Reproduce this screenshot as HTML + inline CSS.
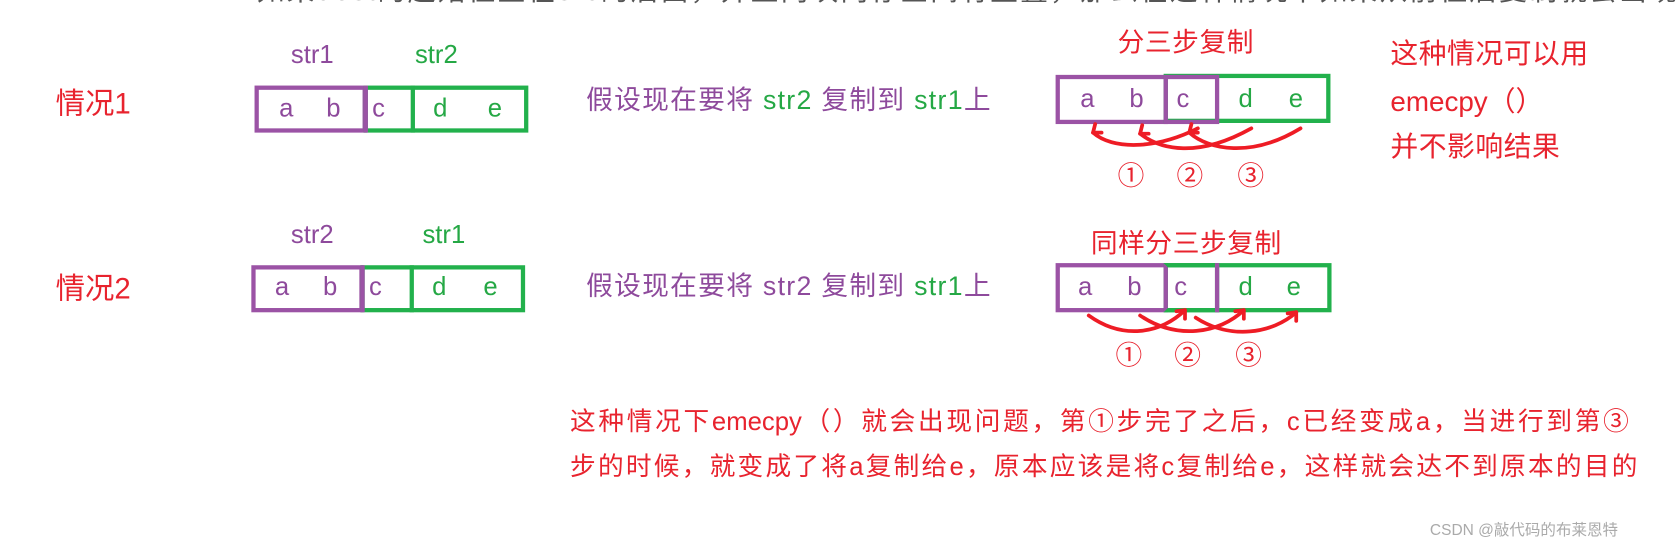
<!DOCTYPE html>
<html><head><meta charset="utf-8"><style>
body{margin:0;width:1677px;height:519px;background:#fff;overflow:hidden;position:relative;font-family:"Liberation Sans","Noto Sans CJK SC",sans-serif}
#w{position:absolute;left:0;top:0;width:1568px;height:486px;transform:scale(1.0695);transform-origin:0 0}
.t{position:absolute;white-space:nowrap;line-height:30px;height:30px}
.j{position:absolute;line-height:30px;height:30px;overflow:hidden;text-align:justify;text-align-last:justify;text-justify:inter-character}
.r{color:#e8232e}.p{color:#8e4a9c}.g{color:#25a845}
.b{position:absolute;box-sizing:border-box}
</style></head><body><div id="w">
<div class="t" style="left:240px;top:-24px;font-size:26px;color:#555;letter-spacing:2px">如果dest的起始位置在src的后面，并且两块内存空间有重叠，那么在这种情况下如果从前往后复制就会出现问题</div>

<div class="t r" style="left:52px;top:82px;font-size:27.5px">情况1</div>
<div class="t p" style="left:272px;top:37px;font-size:24px">str1</div>
<div class="t g" style="left:388px;top:37px;font-size:24px">str2</div>
<div class="b" style="left:238px;top:80px;width:105px;height:44px;border:4px solid #9b53a5"></div>
<div class="b" style="left:340px;top:80px;width:154px;height:44px;border:4px solid #22b14c"></div>
<div class="b" style="left:384px;top:80px;width:4px;height:44px;background:#22b14c"></div>
<div class="b" style="left:340px;top:80px;width:4px;height:44px;background:#9b53a5"></div>
<div class="t p" style="left:261px;top:87px;font-size:24px">a</div>
<div class="t p" style="left:305px;top:87px;font-size:24px">b</div>
<div class="t p" style="left:348px;top:87px;font-size:24px">c</div>
<div class="t g" style="left:405px;top:87px;font-size:24px">d</div>
<div class="t g" style="left:456px;top:87px;font-size:24px">e</div>
<div class="t p" style="left:548px;top:79px;font-size:25px;letter-spacing:1.2px">假设现在要将 <span class="g">str2</span> 复制到 <span class="g">str1</span>上</div>

<div class="t r" style="left:1045px;top:25px;font-size:25px;letter-spacing:0.5px">分三步复制</div>
<div class="b" style="left:987px;top:70px;width:105px;height:46px;border:4px solid #9b53a5"></div>
<div class="b" style="left:1088px;top:69px;width:156px;height:46px;border:4px solid #22b14c"></div>
<div class="b" style="left:1088px;top:70px;width:52px;height:46px;border:4px solid #9b53a5"></div>
<div class="t p" style="left:1010px;top:78px;font-size:24px">a</div>
<div class="t p" style="left:1056px;top:78px;font-size:24px">b</div>
<div class="t p" style="left:1100px;top:78px;font-size:24px">c</div>
<div class="t g" style="left:1158px;top:78px;font-size:24px">d</div>
<div class="t g" style="left:1205px;top:78px;font-size:24px">e</div>
<div class="t r" style="left:1045px;top:150px;font-size:25px">①</div>
<div class="t r" style="left:1100px;top:150px;font-size:25px">②</div>
<div class="t r" style="left:1157px;top:150px;font-size:25px">③</div>

<div class="t r" style="left:1300px;top:35px;font-size:26px;letter-spacing:0.5px">这种情况可以用</div>
<div class="t r" style="left:1300px;top:80px;font-size:26px">emecpy（）</div>
<div class="t r" style="left:1300px;top:122px;font-size:26px;letter-spacing:0.5px">并不影响结果</div>

<div class="t r" style="left:52px;top:255px;font-size:27.5px">情况2</div>
<div class="t p" style="left:272px;top:205px;font-size:24px">str2</div>
<div class="t g" style="left:395px;top:205px;font-size:24px">str1</div>
<div class="b" style="left:235px;top:248px;width:105px;height:44px;border:4px solid #9b53a5"></div>
<div class="b" style="left:337px;top:248px;width:154px;height:44px;border:4px solid #22b14c"></div>
<div class="b" style="left:383px;top:248px;width:4px;height:44px;background:#22b14c"></div>
<div class="b" style="left:337px;top:248px;width:4px;height:44px;background:#9b53a5"></div>
<div class="t p" style="left:257px;top:254px;font-size:24px">a</div>
<div class="t p" style="left:302px;top:254px;font-size:24px">b</div>
<div class="t p" style="left:345px;top:254px;font-size:24px">c</div>
<div class="t g" style="left:404px;top:254px;font-size:24px">d</div>
<div class="t g" style="left:452px;top:254px;font-size:24px">e</div>
<div class="t p" style="left:548px;top:253px;font-size:25px;letter-spacing:1.2px">假设现在要将 str2 复制到 <span class="g">str1</span>上</div>

<div class="t r" style="left:1020px;top:213px;font-size:25px;letter-spacing:0.5px">同样分三步复制</div>
<div class="b" style="left:987px;top:246px;width:105px;height:46px;border:4px solid #9b53a5"></div>
<div class="b" style="left:1088px;top:246px;width:157px;height:46px;border:4px solid #22b14c"></div>
<div class="b" style="left:1088px;top:246px;width:52px;height:46px;border:4px solid #22b14c;border-left-color:#9b53a5"></div>
<div class="b" style="left:1136px;top:246px;width:4px;height:46px;background:#9b53a5"></div>
<div class="t p" style="left:1008px;top:254px;font-size:24px">a</div>
<div class="t p" style="left:1054px;top:254px;font-size:24px">b</div>
<div class="t p" style="left:1098px;top:254px;font-size:24px">c</div>
<div class="t g" style="left:1158px;top:254px;font-size:24px">d</div>
<div class="t g" style="left:1203px;top:254px;font-size:24px">e</div>
<div class="t r" style="left:1043px;top:318px;font-size:25px">①</div>
<div class="t r" style="left:1098px;top:318px;font-size:25px">②</div>
<div class="t r" style="left:1155px;top:318px;font-size:25px">③</div>

<svg width="1568" height="486" style="position:absolute;left:0;top:0" fill="none" stroke="#ee1c25" stroke-width="3.5" stroke-linecap="round">
<path d="M1120 120 C1080 140 1040 140 1022 124"/><path d="M1022 124 l2 -8 M1022 124 l8 0"/>
<path d="M1170 120 C1120 148 1085 140 1066 125"/><path d="M1066 125 l2 -8 M1066 125 l8 0"/>
<path d="M1216 120 C1170 148 1130 140 1112 124"/><path d="M1112 124 l2 -8 M1112 124 l8 0"/>
<path d="M1018 295 C1050 318 1085 312 1108 290"/><path d="M1108 290 l-8 1 M1108 290 l0 8"/>
<path d="M1066 295 C1100 318 1140 312 1163 290"/><path d="M1163 290 l-8 1 M1163 290 l0 8"/>
<path d="M1118 297 C1150 318 1190 312 1212 292"/><path d="M1212 292 l-8 1 M1212 292 l0 8"/>
</svg>

<div class="j r" style="left:533px;top:380px;width:990px;font-size:24px">这种情况下emecpy（）就会出现问题，第①步完了之后，c已经变成a，当进行到第③</div>
<div class="j r" style="left:533px;top:422px;width:998px;font-size:24px">步的时候，就变成了将a复制给e，原本应该是将c复制给e，这样就会达不到原本的目的</div>
<div class="t" style="left:1337px;top:481px;font-size:14.5px;color:#aaa">CSDN @敲代码的布莱恩特</div>
</div></body></html>
